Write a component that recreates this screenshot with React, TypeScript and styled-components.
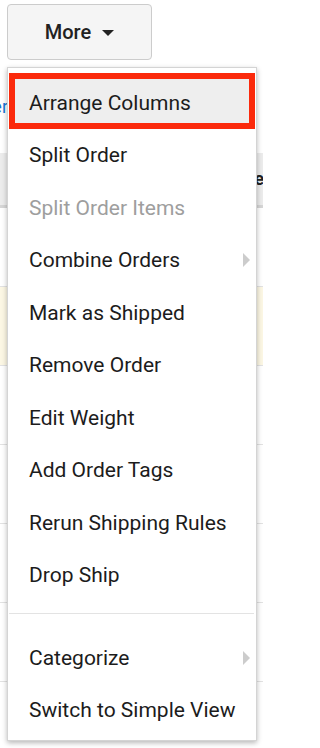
import React from "react";
import styled, { createGlobalStyle } from "styled-components";

const Global = createGlobalStyle`
  html, body { margin: 0; padding: 0; background: #ffffff; }
  body { width: 263px; height: 748px; overflow: hidden; font-family: Roboto, "Liberation Sans", Arial, sans-serif; }
  * { box-sizing: border-box; }
`;

const Page = styled.div`
  position: relative;
  width: 263px;
  height: 748px;
  overflow: hidden;
  background: #fff;
`;

const TopArea = styled.div`
  height: 153px;
  display: flex;
  flex-direction: column;
`;

const ButtonRow = styled.div`
  display: flex;
  padding: 4px 0 0 7px;
`;

const MoreButton = styled.button`
  width: 145px;
  height: 56px;
  display: flex;
  align-items: center;
  justify-content: center;
  gap: 11px;
  background: #f5f5f5;
  border: 1px solid #cccccc;
  border-radius: 4px;
  font-family: Roboto, "Liberation Sans", Arial, sans-serif;
  font-size: 20px;
  font-weight: 500;
  color: #222;
  padding: 0 0 0 0;
`;

const Caret = styled.span`
  width: 0;
  height: 0;
  border-left: 6px solid transparent;
  border-right: 6px solid transparent;
  border-top: 6px solid #222;
  margin-top: 1px;
`;

const LinkRow = styled.div`
  display: flex;
  margin-top: 36px;
`;

const LinkClip = styled.div`
  width: 7px;
  overflow: hidden;
  display: flex;
  justify-content: flex-end;
  white-space: nowrap;
`;

const Link = styled.span`
  color: #1976d2;
  font-size: 18px;
  line-height: 22px;
  margin-right: -1px;
`;

const HeaderRow = styled.div`
  height: 55px;
  background: #ececec;
  border-bottom: 3px solid #d6d6d6;
  display: flex;
  align-items: center;
  justify-content: flex-end;
  font-size: 18px;
  font-weight: 700;
  color: #222;
  white-space: nowrap;
  overflow: hidden;
`;

const HeaderText = styled.span`
  margin-right: -1px;
  padding-bottom: 2px;
`;

const Row = styled.div<{ $highlight?: boolean }>`
  height: 79px;
  border-bottom: 1px solid #e2e2e2;
  background: ${(p) => (p.$highlight ? "#fcf7e4" : "#ffffff")};
`;

const Menu = styled.div`
  position: absolute;
  left: 7px;
  top: 67px;
  width: 250px;
  background: #fff;
  border: 1px solid #d4d4d4;
  box-shadow: 0 2px 5px rgba(0, 0, 0, 0.28);
  padding: 5px 0 3px 0;
  display: flex;
  flex-direction: column;
`;

const Item = styled.div<{ $disabled?: boolean }>`
  height: 52.5px;
  display: flex;
  align-items: center;
  justify-content: space-between;
  padding: 0 6px 0 21px;
  font-size: 21px;
  color: ${(p) => (p.$disabled ? "#9e9e9e" : "#1c1c1c")};
  white-space: nowrap;
`;

const ActiveItem = styled.div`
  height: 56px;
  margin: 0 1px;
  display: flex;
  align-items: center;
  padding: 4px 0 0 14px;
  border: 6px solid #fb2a0c;
  background: #eeeeee;
  font-size: 21px;
  color: #1c1c1c;
  white-space: nowrap;
`;

const SubArrow = styled.span`
  width: 0;
  height: 0;
  border-top: 7px solid transparent;
  border-bottom: 7px solid transparent;
  border-left: 7px solid #cccccc;
`;

const Separator = styled.div`
  height: 1px;
  background: #e3e3e3;
  margin: 11px 2px 18px 1px;
`;

type Entry = { label: string; disabled?: boolean; sub?: boolean };

const group1: Entry[] = [
  { label: "Split Order" },
  { label: "Split Order Items", disabled: true },
  { label: "Combine Orders", sub: true },
  { label: "Mark as Shipped" },
  { label: "Remove Order" },
  { label: "Edit Weight" },
  { label: "Add Order Tags" },
  { label: "Rerun Shipping Rules" },
  { label: "Drop Ship" },
];

const group2: Entry[] = [
  { label: "Categorize", sub: true },
  { label: "Switch to Simple View" },
];

const renderEntry = (e: Entry) => (
  <Item key={e.label} $disabled={e.disabled}>
    <span>{e.label}</span>
    {e.sub && <SubArrow />}
  </Item>
);

export default function App() {
  return (
    <Page>
      <Global />
      <TopArea>
        <ButtonRow>
          <MoreButton>
            More
            <Caret />
          </MoreButton>
        </ButtonRow>
        <LinkRow>
          <LinkClip>
            <Link>Filter</Link>
          </LinkClip>
        </LinkRow>
      </TopArea>
      <HeaderRow>
        <HeaderText>Date</HeaderText>
      </HeaderRow>
      <Row />
      <Row $highlight />
      <Row />
      <Row />
      <Row />
      <Row />
      <Row />
      <Menu>
        <ActiveItem>Arrange Columns</ActiveItem>
        {group1.map(renderEntry)}
        <Separator />
        {group2.map(renderEntry)}
      </Menu>
    </Page>
  );
}
